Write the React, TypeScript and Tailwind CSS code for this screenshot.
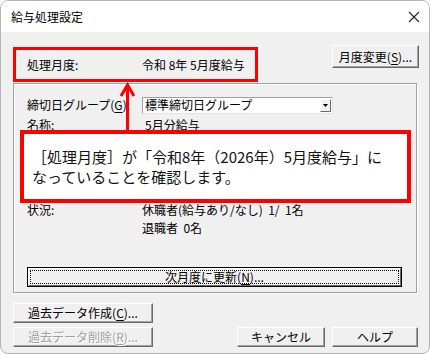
import React from "react";

const btn =
  "flex items-center justify-center h-[20px] border border-t-white border-l-white border-r-[#696969] border-b-[#696969] shadow-[inset_-1px_-1px_0_#a0a0a0] bg-[#f0f0f0] text-[12px] leading-[16px]";

const Mn = ({ c }: { c: string }) => <span className="underline underline-offset-2">{c}</span>;

const Row = ({ label, children, className = "" }: { label: React.ReactNode; children: React.ReactNode; className?: string }) => (
  <div className={`flex items-start ${className}`}>
    <div className="w-[115px] shrink-0">{label}</div>
    <div>{children}</div>
  </div>
);

const App = () => {
  return (
    <div className="relative w-[430px] h-[354px] bg-[#f0f0f0] border border-[#b4b4b4] rounded-[8px] overflow-hidden text-black text-[12px] leading-[16px] font-['Noto_Sans_CJK_JP',sans-serif]">
      {/* title bar */}
      <div className="h-[31px] bg-white flex items-center justify-between pl-[10px] pr-[8px]">
        <span className="text-[12px]">給与処理設定</span>
        <svg width="12" height="12" viewBox="0 0 12 12" className="mr-[1px]">
          <path d="M1 1 L11 11 M11 1 L1 11" stroke="#222" strokeWidth="1.1" fill="none" />
        </svg>
      </div>

      <div className="px-[12px]">
        {/* month row */}
        <div className="flex justify-between items-start pt-[13px]">
          <div className="mt-[2px] w-[245px] h-[35px] border-[3px] border-[#ff0000] flex items-center pl-[11px] pt-[1px]">
            <span className="w-[115px]">処理月度:</span>
            <span className="whitespace-pre">令和 8年 5月度給与</span>
          </div>
          <div className={`${btn} w-[87px] h-[23px] mr-[-2px]`}>
            月度変更(<Mn c="S" />)...
          </div>
        </div>

        {/* group box */}
        <div className="mt-[1px] w-[404px] h-[210px] border border-[#a0a0a0] shadow-[inset_1px_1px_0_#ffffff,1px_1px_0_#ffffff] pl-[13px] pt-[13px]">
          <div className="flex items-center h-[16px]">
            <div className="w-[115px] shrink-0">
              締切日グループ(<Mn c="G" />):
            </div>
            <div className="w-[191px] h-[17px] bg-white border border-[#a0a0a0] border-b-[#e3e3e3] border-r-[#e3e3e3] flex items-center justify-between pl-[2px] pr-[1px]">
              <span>標準締切日グループ</span>
              <div className="w-[11px] h-[13px] bg-[#f0f0f0] border border-t-white border-l-white border-r-[#696969] border-b-[#696969] flex items-center justify-center">
                <svg width="5" height="3" viewBox="0 0 5 3">
                  <path d="M0 0 H5 L2.5 3 Z" fill="#000" />
                </svg>
              </div>
            </div>
          </div>
          <Row label="名称:" className="mt-[4px]">
            <span className="pl-[3px]">5月分給与</span>
          </Row>
          <Row label="状況:" className="mt-[68px] leading-[18px]">
            <div className="whitespace-pre leading-[18px]">休職者(給与あり/なし)  1/  1名</div>
            <div className="whitespace-pre leading-[18px]">退職者  0名</div>
          </Row>
          <div className="mt-[30px] w-[375px] h-[20px] border border-black">
            <div className="h-full border border-t-white border-l-white border-r-[#696969] border-b-[#696969] p-[1px]">
              <div className="h-full border border-dotted border-black flex items-center justify-center">
                次月度に更新(<Mn c="N" />)...
              </div>
            </div>
          </div>
        </div>

        {/* bottom buttons */}
        <div className="mt-[10px] flex justify-between items-end">
          <div className="flex flex-col gap-[4px]">
            <div className={`${btn} w-[140px]`}>
              過去データ作成(<Mn c="C" />)...
            </div>
            <div className={`${btn} w-[140px] text-[#a0a0a0] [text-shadow:1px_1px_0_#ffffff]`}>
              過去データ削除(<Mn c="R" />)...
            </div>
          </div>
          <div className="flex gap-[7px] mr-[-1px]">
            <div className={`${btn} w-[88px]`}>キャンセル</div>
            <div className={`${btn} w-[86px]`}>ヘルプ</div>
          </div>
        </div>
      </div>

      {/* annotation arrow */}
      <svg className="absolute left-0 top-0 pointer-events-none" width="430" height="354" viewBox="0 0 430 354">
        <line x1="126.5" y1="84" x2="126.5" y2="132" stroke="#ff0000" strokeWidth="3" />
        <polyline points="120,95 126.5,84 133,95" stroke="#ff0000" strokeWidth="3" fill="none" />
      </svg>

      {/* annotation box */}
      <div className="absolute left-[19px] top-[129px] w-[391px] h-[73px] bg-white border-[4px] border-[#ff0000] flex flex-col justify-center pl-[8px] text-[15px] leading-[20px] text-[#111]">
        <p>［処理月度］が「令和8年（2026年）5月度給与」に</p>
        <p>なっていることを確認します。</p>
      </div>
    </div>
  );
};

export default App;
